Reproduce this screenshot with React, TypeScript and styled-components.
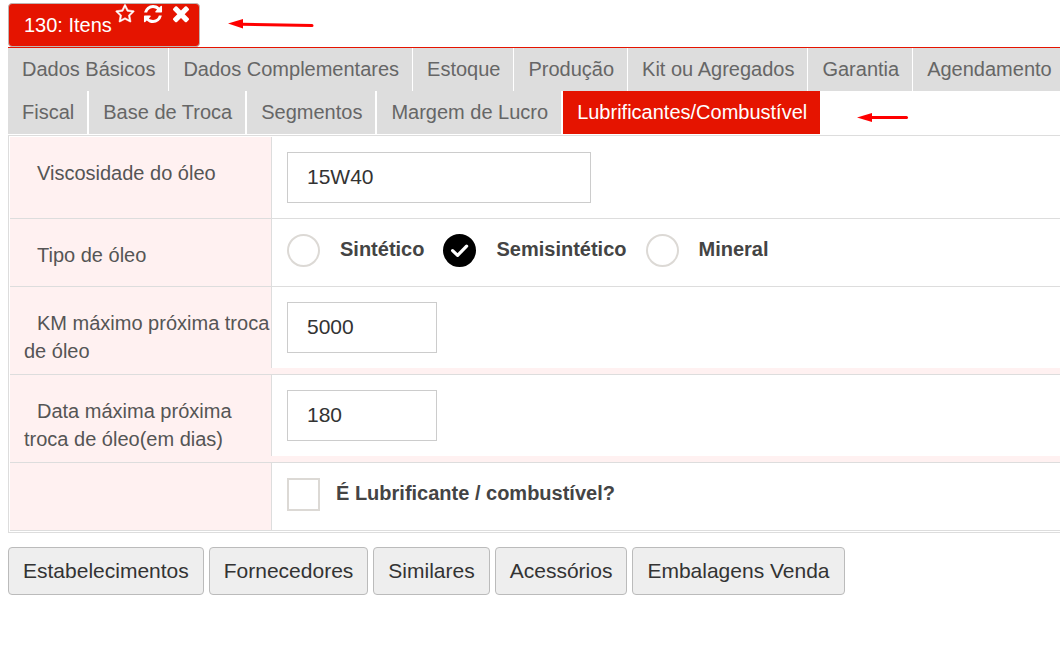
import React, { useState } from "react";
import styled, { createGlobalStyle } from "styled-components";

const RED = "#e51400";
const LINE = "#dddddd";

const GlobalStyle = createGlobalStyle`
  *, *::before, *::after { box-sizing: border-box; }
  body {
    margin: 0;
    background: #fff;
    color: #555;
    font-family: "Liberation Sans", Arial, Helvetica, sans-serif;
    font-size: 20px;
    line-height: 28px;
  }
`;

const Page = styled.div`
  position: relative;
  padding: 3px 0 20px 8px;
  overflow: hidden;
`;

const WindowBar = styled.header`
  display: flex;
  border-bottom: 1px solid ${RED};
`;

const WindowTab = styled.div`
  display: flex;
  align-items: flex-start;
  gap: 3px;
  height: 44px;
  padding: 0 8px 0 15px;
  background: ${RED};
  border: 1px solid #c0b4b2;
  border-radius: 4px;
  color: #fff;
`;

const WindowTitle = styled.h1`
  margin: 0;
  padding-top: 7px;
  font-size: 20px;
  font-weight: 400;
  line-height: 28px;
`;

const WindowActions = styled.div`
  display: flex;
  gap: 8px;
`;

const IconButton = styled.button`
  display: flex;
  padding: 0;
  border: 0;
  background: none;
  color: inherit;
  cursor: pointer;

  svg {
    width: 20px;
    height: 20px;
    fill: currentColor;
  }
`;

const TabRow = styled.div<{ $gap: number }>`
  display: flex;
  gap: ${(p) => p.$gap}px;
`;

const Tab = styled.button<{ $active: boolean }>`
  flex: none;
  height: 43px;
  padding: 0 13px 1px 14px;
  border: 0;
  background: ${(p) => (p.$active ? RED : LINE)};
  color: ${(p) => (p.$active ? "#fff" : "#666")};
  font: inherit;
  white-space: nowrap;
  cursor: pointer;
`;

const Panel = styled.form`
  margin: 1px -4px 0 0;
  padding: 1px;
  border: 1px solid ${LINE};
`;

const Row = styled.div`
  display: grid;
  grid-template-columns: 261px 1fr;
  background: #fff1f1;
  border-bottom: 1px solid ${LINE};
`;

const LabelCell = styled.div`
  padding: 22px 0 9px 14px;
  text-indent: 13px;
`;

const ControlCell = styled.div`
  display: flex;
  align-items: flex-start;
  align-self: start;
  gap: 19px;
  min-height: 67px;
  padding: 15px;
  border-left: 1px solid ${LINE};
  background: #fff;
`;

const TextInput = styled.input<{ $wide?: boolean }>`
  width: ${(p) => (p.$wide ? 304 : 150)}px;
  height: 51px;
  padding: 0 19px 1px;
  border: 1px solid #ccc;
  background: #fff;
  color: #333;
  font-family: inherit;
  font-size: 21px;
  outline: none;
`;

const Choice = styled.label<{ $gap: number }>`
  display: flex;
  gap: ${(p) => p.$gap}px;
  color: #444;
  font-weight: 700;
  line-height: 30px;
  cursor: pointer;
`;

const Mark = styled.span`
  display: grid;
  width: 33px;
  height: 33px;

  > * { grid-area: 1 / 1; }
  svg { visibility: hidden; pointer-events: none; width: 33px; height: 33px; }
  input:checked + svg { visibility: visible; }
`;

const MarkInput = styled.input`
  appearance: none;
  width: 33px;
  height: 33px;
  margin: 0;
  border: 2px solid #dcd9d5;
  background: #fff;

  &[type="radio"] { border-radius: 50%; }
  &:checked { border-color: #000; background: #000; }
`;

const Actions = styled.footer`
  display: flex;
  flex-wrap: wrap;
  gap: 5px;
  margin-top: 14px;
`;

const ActionButton = styled.button`
  height: 48px;
  padding: 0 14px;
  border: 1px solid #bbb;
  border-radius: 4px;
  background: #eee;
  color: #333;
  font-family: inherit;
  font-size: 21px;
  cursor: pointer;
`;

const Arrow = styled.svg<{ $x: number; $y: number }>`
  position: absolute;
  left: ${(p) => p.$x}px;
  top: ${(p) => p.$y}px;
  overflow: visible;
  pointer-events: none;
`;

const STAR =
  "M1137 1004l306-297-422-62-189-382-189 382-422 62 306 297-73 421 378-199 377 199zm527-357q0 22-26 48l-363 354 86 500q1 7 1 20 0 50-41 50-19 0-40-12l-449-236-449 236q-22 12-40 12-21 0-31.5-14.5t-10.5-35.5q0-6 2-20l86-500-364-354q-25-27-25-48 0-37 56-46l502-73 225-455q19-41 49-41t49 41l225 455 502 73q56 9 56 46z";
const REFRESH =
  "M1639 1056q0 5-1 7-64 268-268 434.5t-478 166.5q-146 0-282.5-55t-243.5-157l-129 129q-19 19-45 19t-45-19-19-45v-448q0-26 19-45t45-19h448q26 0 45 19t19 45-19 45l-137 137q71 66 161 102t187 36q134 0 250-65t186-179q11-17 53-117 8-23 30-23h192q13 0 22.5 9.5t9.5 22.5zm25-800v448q0 26-19 45t-45 19h-448q-26 0-45-19t-19-45 19-45l138-138q-148-137-349-137-134 0-250 65t-186 179q-11 17-53 117-8 23-30 23h-199q-13 0-22.5-9.5t-9.5-22.5v-7q65-268 270-434.5t480-166.5q146 0 284 55.5t245 156.5l130-129q19-19 45-19t45 19 19 45z";
const TIMES =
  "M1490 1322q0 40-28 68l-136 136q-28 28-68 28t-68-28l-294-294-294 294q-28 28-68 28t-68-28l-136-136q-28-28-28-68t28-68l294-294-294-294q-28-28-28-68t28-68l136-136q28-28 68-28t68 28l294 294 294-294q28-28 68-28t68 28l136 136q28 28 28 68t-28 68l-294 294 294 294q28 28 28 68z";

const TAB_ROWS = [
  {
    gap: 1,
    names: ["Dados Básicos", "Dados Complementares", "Estoque", "Produção", "Kit ou Agregados", "Garantia", "Agendamento"],
  },
  {
    gap: 2,
    names: ["Fiscal", "Base de Troca", "Segmentos", "Margem de Lucro", "Lubrificantes/Combustível"],
  },
];
const OIL_TYPES = ["Sintético", "Semisintético", "Mineral"];
const ACTIONS = ["Estabelecimentos", "Fornecedores", "Similares", "Acessórios", "Embalagens Venda"];

function CheckGlyph() {
  return (
    <svg viewBox="0 0 33 33" aria-hidden="true">
      <path d="M9.6 16.6L14.6 21.4L23.6 12.2" fill="none" stroke="#fff" strokeWidth="3.2" strokeLinecap="round" strokeLinejoin="round" />
    </svg>
  );
}

export default function App() {
  const [tab, setTab] = useState("Lubrificantes/Combustível");
  const [oil, setOil] = useState("Semisintético");

  return (
    <Page>
      <GlobalStyle />
      <WindowBar>
        <WindowTab>
          <WindowTitle>130: Itens</WindowTitle>
          <WindowActions>
            <IconButton type="button" aria-label="Favoritar">
              <svg viewBox="-64 0 1792 1792"><path d={STAR} stroke="currentColor" strokeWidth="50" /></svg>
            </IconButton>
            <IconButton type="button" aria-label="Atualizar">
              <svg viewBox="46 46 1700 1700"><path d={REFRESH} /></svg>
            </IconButton>
            <IconButton type="button" aria-label="Fechar">
              <svg viewBox="156 200 1480 1480"><path d={TIMES} /></svg>
            </IconButton>
          </WindowActions>
        </WindowTab>
      </WindowBar>

      <nav>
        {TAB_ROWS.map((row) => (
          <TabRow key={row.names[0]} $gap={row.gap}>
            {row.names.map((name) => (
              <Tab key={name} type="button" $active={name === tab} onClick={() => setTab(name)}>
                {name}
              </Tab>
            ))}
          </TabRow>
        ))}
      </nav>

      <Panel onSubmit={(e) => e.preventDefault()}>
        <Row>
          <LabelCell><label htmlFor="viscosidade">Viscosidade do óleo</label></LabelCell>
          <ControlCell><TextInput id="viscosidade" $wide defaultValue="15W40" /></ControlCell>
        </Row>
        <Row role="radiogroup" aria-labelledby="tipo">
          <LabelCell id="tipo">Tipo de óleo</LabelCell>
          <ControlCell>
            {OIL_TYPES.map((name) => (
              <Choice key={name} $gap={20}>
                <Mark>
                  <MarkInput type="radio" name="tipo" checked={oil === name} onChange={() => setOil(name)} />
                  <CheckGlyph />
                </Mark>
                {name}
              </Choice>
            ))}
          </ControlCell>
        </Row>
        <Row>
          <LabelCell><label htmlFor="km">KM máximo próxima troca de óleo</label></LabelCell>
          <ControlCell><TextInput id="km" defaultValue="5000" /></ControlCell>
        </Row>
        <Row>
          <LabelCell><label htmlFor="dias">Data máxima próxima troca de óleo(em dias)</label></LabelCell>
          <ControlCell><TextInput id="dias" defaultValue="180" /></ControlCell>
        </Row>
        <Row>
          <LabelCell />
          <ControlCell>
            <Choice $gap={16}>
              <Mark>
                <MarkInput type="checkbox" />
                <CheckGlyph />
              </Mark>
              É Lubrificante / combustível?
            </Choice>
          </ControlCell>
        </Row>
      </Panel>

      <Actions>
        {ACTIONS.map((name) => (
          <ActionButton key={name} type="button">{name}</ActionButton>
        ))}
      </Actions>

      <Arrow $x={228} $y={16} width="86" height="16" viewBox="0 0 86 16" aria-hidden="true">
        <path d="M14 8.2L84 9.6" stroke="#f00" strokeWidth="3" strokeLinecap="round" />
        <path d="M0 7.5L15 3V12.5Z" fill="#f00" />
      </Arrow>
      <Arrow $x={857} $y={110} width="52" height="16" viewBox="0 0 52 16" aria-hidden="true">
        <path d="M13 7.5H49.5" stroke="#f00" strokeWidth="3" strokeLinecap="round" />
        <path d="M0 7.5L15 3V12Z" fill="#f00" />
      </Arrow>
    </Page>
  );
}
